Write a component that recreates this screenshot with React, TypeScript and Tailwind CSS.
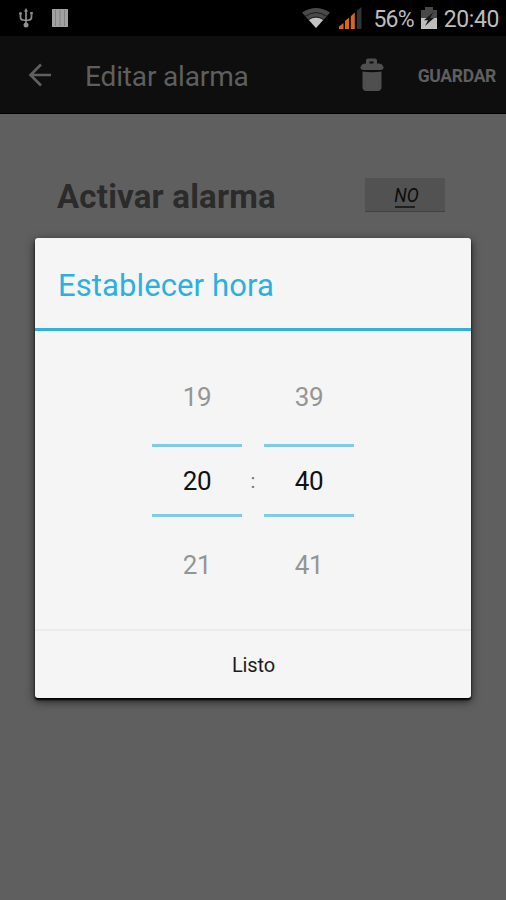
import { useState } from "react";
import clsx from "clsx";

// Status bar icons
const UsbIcon = () => (
  <svg width="16" height="20" viewBox="0 0 16 20" fill="none" stroke="#8f8f8f" strokeWidth="1.7">
    <path d="M8 3v14M2.500 6.500v2.800q0 2.400 2.400 2.700L8 12.500l3.100-.5q2.400-.3 2.400-2.700V6.500" />
    <path d="M8 0l2 3.500H6z" fill="#8f8f8f" stroke="none" />
    <circle cx="8" cy="17" r="2.500" fill="#8f8f8f" stroke="none" />
    <circle cx="2.500" cy="5.500" r="1.500" fill="#8f8f8f" stroke="none" />
    <path d="M12.200 4h2.600v2.600h-2.600z" fill="#8f8f8f" stroke="none" />
  </svg>
);

const BarsIcon = () => (
  <svg width="16" height="18" viewBox="0 0 16 18">
    <path d="M0 0h16v18H0z" fill="#a0a0a0" />
    <path d="M3.500 1v16M8 1v16M12.500 1v16" stroke="#828282" strokeWidth="1" />
  </svg>
);

const WifiIcon = () => (
  <svg width="28" height="20" viewBox="0 0 28 20">
    <path d="M0 4.500Q14-4.500 28 4.500L14 20z" fill="#4a4a4a" />
    <path d="M3.500 8.200Q14 1 24.500 8.200M6.500 11.800Q14 6 21.500 11.800" fill="none" stroke="#1c1c1c" strokeWidth="1" />
    <path d="M6.900 12Q14 7.500 21.100 12L14 20z" fill="#c4c4c4" />
  </svg>
);

const SignalIcon = () => (
  <svg width="23" height="22" viewBox="0 0 23 22">
    <path d="M0 22v-2.500L4.500 16v6zM6 22v-8l4-3.500V22zM11.800 22V9.200L15.800 5.500V22z" fill="#d9671c" />
    <path d="M18 22V3.500L22.500 0v22z" fill="#333" />
  </svg>
);

const BatteryIcon = () => (
  <svg width="16" height="22" viewBox="0 0 16 22">
    <path d="M0 3h4V0h8v3h4v19H0z" fill="#484848" />
    <path d="M0 11h16v11H0z" fill="#bdbdbd" />
    <path d="M12.500 5L3 13.200h4L4 19l9-8H9z" fill="#161616" />
  </svg>
);

// Action bar icons
const BackIcon = () => (
  <svg width="24" height="24" viewBox="0 0 24 24" fill="none" stroke="#606060" strokeWidth="2.600">
    <path d="M23 12H2.500M13 1.500L2.500 12 13 22.500" />
  </svg>
);

const TrashIcon = () => (
  <svg width="24" height="34" viewBox="0 0 24 34" fill="#4f4f4f">
    <path d="M6 6V2.500Q6 .5 8 .5h7q2 0 2 2V6h-3.500V3.500h-4V6z" />
    <path d="M.5 9.500Q1 5.500 6 5.500h12q5 0 5.500 4 0 2.500-3.500 2.500H4Q.5 12 .5 9.500z" />
    <path d="M2.500 13.500q9.500 1.500 19 0V29q0 4-4 4h-11q-4 0-4-4z" />
  </svg>
);

type PickerProps = {
  value: number;
  max: number;
  onChange: (value: number) => void;
};

const NumberPicker = ({ value, max, onChange }: PickerProps) => {
  const prev = (value + max - 1) % max;
  const next = (value + 1) % max;
  const side = "block h-[48px] w-full text-[#959595]";

  return (
    <div className="flex w-[90px] flex-col items-center pt-px text-[26px] leading-[48px] tracking-[-0.3px]">
      <button className={side} onClick={() => onChange(prev)}>
        {prev}
      </button>
      <div className="mt-[23px] mb-[24px] flex h-[73px] w-full items-center justify-center border-y-3 border-[#7fcae4] pt-[2px] text-[#111]">
        {value}
      </div>
      <button className={side} onClick={() => onChange(next)}>
        {next}
      </button>
    </div>
  );
};

const App = () => {
  const [hour, setHour] = useState<number>(20);
  const [minute, setMinute] = useState<number>(40);
  const [enabled, setEnabled] = useState<boolean>(false);

  return (
    <div className="relative h-[900px] w-[506px] overflow-hidden bg-[#5f5f5f] font-['Roboto',sans-serif]">
      {/* status bar */}
      <div className="flex h-[36px] items-center bg-black text-[23px] leading-[36px] text-[#bcbcbc]">
        <div className="ml-[18px] flex items-center gap-[18px]">
          <UsbIcon />
          <BarsIcon />
        </div>
        <div className="ml-auto flex items-center pr-[7px]">
          <WifiIcon />
          <span className="ml-[9px]">
            <SignalIcon />
          </span>
          <span className="ml-[11px] pt-[3px] leading-[33px] tracking-[-0.8px]">56%</span>
          <span className="ml-[7px]">
            <BatteryIcon />
          </span>
          <span className="ml-[7px] pt-[3px] leading-[33px] tracking-[-0.4px]">20:40</span>
        </div>
      </div>

      {/* action bar */}
      <div className="flex h-[78px] items-center border-b border-black bg-[#0e0e0e] text-[#5f5f5f]">
        <button className="ml-[28px] pt-px">
          <BackIcon />
        </button>
        <h1 className="ml-[33px] pt-[4px] text-[28px] leading-[32px] tracking-[-0.15px]">Editar alarma</h1>
        <button className="ml-auto">
          <TrashIcon />
        </button>
        <button className="mr-[10px] ml-[34px] pt-[4px] text-[17.5px] font-bold tracking-[-0.3px]">GUARDAR</button>
      </div>

      {/* alarm switch */}
      <div className="mt-[62px] flex items-start justify-between pr-[61px] pl-[57px]">
        <span className="pt-px text-[33px] leading-[40px] font-bold tracking-[0.2px] text-[#2b2b2b]">Activar alarma</span>
        <button
          className="mt-[2px] flex h-[34px] w-[80px] flex-col items-center border-b border-[#414141] bg-[#525252] pt-[7px] text-[20px] leading-[21px] text-[#0c0c0c] italic"
          onClick={() => setEnabled(!enabled)}
        >
          <span className="ml-[3px] scale-x-90">{enabled ? "SÍ" : "NO"}</span>
          <span className={clsx("h-[2px] w-[20px] shrink-0", enabled ? "bg-[#33b5e5]" : "bg-[#1f1f1f]")} />
        </button>
      </div>

      {/* time dialog */}
      <div className="absolute top-[238px] left-[35px] flex h-[460px] w-[436px] flex-col rounded-[3px] bg-[#f5f5f5] shadow-[0_2px_2px_#000,0_3px_10px_rgba(0,0,0,0.7)]">
        <h2 className="h-[93px] border-b-3 border-[#2fb1dc] pl-[23px] text-[31px] leading-[95px] tracking-[0.1px] text-[#2bb1e0]">
          Establecer hora
        </h2>
        <div className="flex flex-1 items-center justify-center">
          <NumberPicker value={hour} max={24} onChange={setHour} />
          <span className="w-[22px] pt-[2px] text-center text-[20px] text-[#777]">:</span>
          <NumberPicker value={minute} max={60} onChange={setMinute} />
        </div>
        <button className="h-[69px] border-t-2 border-[#ebebeb] pl-px text-[20px] tracking-[-0.1px] text-[#1c1c1c]">Listo</button>
      </div>
    </div>
  );
};

export default App;
